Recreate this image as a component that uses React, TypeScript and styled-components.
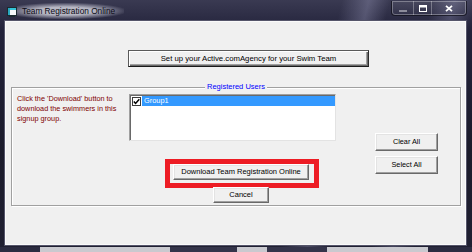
import type { FC } from 'react'
import { createGlobalStyle, styled } from 'styled-components'

const GlobalStyle = createGlobalStyle`
  html, body {
    margin: 0;
    padding: 0;
    background: #1e1e2e;
  }
  body {
    font-family: 'Liberation Sans', Arial, sans-serif;
  }
`

const Window = styled.div`
  width: 472px;
  height: 252px;
  box-sizing: border-box;
  display: flex;
  flex-direction: column;
  overflow: hidden;
  background:
    linear-gradient(
        to right,
        #2b2b40 0 40px,
        #c9c9cf 40px 170px,
        #34344a 170px 237px,
        #c9c9cf 237px 267px,
        #34344a 267px 327px,
        #c9c9cf 327px 428px,
        #2b2b40 428px
      )
      0 247px / 100% 5px no-repeat,
    linear-gradient(
      104deg,
      transparent 64%,
      rgba(170, 170, 205, 0.32) 69%,
      transparent 73%,
      transparent 81%,
      rgba(160, 160, 200, 0.28) 85%,
      transparent 89%
    ),
    linear-gradient(#3a3a52, #22223a 12%, #1b1b2b 60%, #202032);
`

const TitleBar = styled.div`
  height: 21px;
  display: flex;
  align-items: flex-start;
  flex-shrink: 0;
`

const AppIcon = styled.svg`
  margin: 7px 0 0 7px;
  flex-shrink: 0;
`

const TitleText = styled.div`
  margin: 3px 0 0 0;
  padding: 0 9px 0 5px;
  height: 16px;
  line-height: 16px;
  font-size: 8.3px;
  color: #0a0a14;
  background: radial-gradient(
    ellipse at 45% 50%,
    rgba(215, 215, 225, 0.8) 35%,
    rgba(200, 200, 215, 0.35) 60%,
    rgba(200, 200, 215, 0) 75%
  );
`

const CaptionGroup = styled.div`
  margin: 1px 5px 0 auto;
  height: 14px;
  display: flex;
  border: 1px solid rgba(10, 10, 20, 0.7);
  border-top: none;
  border-radius: 0 0 4px 4px;
  box-shadow: inset 0 0 0 1px rgba(255, 255, 255, 0.3);
  overflow: hidden;
  background: linear-gradient(rgba(255, 255, 255, 0.08), rgba(255, 255, 255, 0.02));
`

const CaptionButton = styled.div<{ $w: number }>`
  width: ${(p) => p.$w}px;
  height: 100%;
  display: flex;
  align-items: center;
  justify-content: center;
  & + & {
    border-left: 1px solid rgba(255, 255, 255, 0.3);
  }
`

const Client = styled.div`
  flex: 1;
  margin: 0 6px 7px 5px;
  background: #f0f0f0;
  border: 1px solid #fafafa;
  box-shadow: 0 0 0 1px #55556a;
  display: flex;
  flex-direction: column;
  align-items: flex-start;
`

const ClassicButton = styled.button`
  box-sizing: border-box;
  padding: 0;
  margin: 0;
  display: flex;
  align-items: center;
  justify-content: center;
  font-family: 'Liberation Sans', Arial, sans-serif;
  font-size: 7.5px;
  line-height: 1;
  color: #000;
  background: #f0f0f0;
  border: 1px solid;
  border-color: #ffffff #696969 #696969 #ffffff;
  box-shadow: inset -1px -1px #a0a0a0, inset 1px 1px #e3e3e3;
  cursor: default;
`

const SetupButton = styled(ClassicButton)`
  width: 241px;
  height: 17px;
  margin: 28px 0 0 122px;
  font-size: 7.75px;
  border-color: #5a5a5a #2a2a2a #1a1a1a #5a5a5a;
  box-shadow: inset 1px 1px #ffffff, inset -1px -1px #696969, inset -2px -2px #a0a0a0;
`

const GroupBox = styled.div`
  position: relative;
  box-sizing: border-box;
  width: 450px;
  height: 119px;
  margin: 20px 0 0 5px;
  border: 1px solid #a0a0a0;
  box-shadow: inset 1px 1px #ffffff, 1px 1px #ffffff;
  display: flex;
  align-items: flex-start;
`

const Legend = styled.span`
  position: absolute;
  top: -6px;
  left: 50%;
  transform: translateX(-50%);
  padding: 0 2px;
  background: #f0f0f0;
  color: #0000ff;
  font-size: 7.5px;
  line-height: 10px;
  white-space: nowrap;
`

const HelpText = styled.p`
  margin: 6px 0 0 5px;
  width: 112px;
  color: #800000;
  font-size: 7.3px;
  line-height: 10px;
`

const MiddleColumn = styled.div`
  width: 207px;
  display: flex;
  flex-direction: column;
  align-items: flex-start;
`

const ListBox = styled.div`
  box-sizing: border-box;
  width: 207px;
  height: 47px;
  margin-top: 6px;
  background: #ffffff;
  border: 1px solid;
  border-color: #a0a0a0 #e3e3e3 #e3e3e3 #a0a0a0;
  box-shadow: inset 1px 1px #696969;
  padding: 1px 0 0 1px;
`

const ListRow = styled.div`
  display: flex;
  align-items: center;
  height: 10px;
`

const CheckBox = styled.span`
  box-sizing: border-box;
  width: 9px;
  height: 9px;
  margin-left: 1px;
  border: 1px solid #3c3c3c;
  background: #ffffff;
  display: flex;
  align-items: center;
  justify-content: center;
  flex-shrink: 0;
`

const RowLabel = styled.span<{ $selected: boolean }>`
  flex: 1;
  height: 10px;
  margin-left: 1px;
  padding-left: 2px;
  font-size: 7.4px;
  line-height: 10px;
  color: ${(p) => (p.$selected ? '#ffffff' : '#000000')};
  background: ${(p) => (p.$selected ? '#3399ff' : 'transparent')};
`

const Highlight = styled.div`
  box-sizing: border-box;
  width: 154px;
  height: 29px;
  margin: 18px 0 0 36px;
  border: 5px solid #ed1c24;
  padding: 0 5px 3px 3px;
`

const DownloadButton = styled(ClassicButton)`
  width: 136px;
  height: 16px;
`

const CancelButton = styled(ClassicButton)`
  width: 56px;
  height: 16px;
  margin: -1px 0 0 84px;
`

const SideColumn = styled.div`
  margin: 45px 0 0 39px;
  display: flex;
  flex-direction: column;
  gap: 5px;
`

const SideButton = styled(ClassicButton)`
  width: 63px;
  height: 18px;
  font-size: 7.3px;
`

const TeamIcon: FC = () => (
  <AppIcon width="10" height="10" viewBox="0 0 10 10">
    <rect x="0.5" y="0.5" width="9" height="8" fill="#f4f8fa" stroke="#1a2a30" />
    <rect x="1" y="1" width="8" height="2" fill="#35c4d8" />
    <rect x="1" y="1" width="2" height="7" fill="#2aa8c0" />
    <rect x="2" y="8.5" width="6" height="1.5" fill="#1a2a30" />
  </AppIcon>
)

const App: FC = () => {
  return (
    <>
      <GlobalStyle />
      <Window>
        <TitleBar>
          <TeamIcon />
          <TitleText>Team Registration Online</TitleText>
          <CaptionGroup>
            <CaptionButton $w={21}>
              <svg width="8" height="3" viewBox="0 0 8 3" style={{ marginTop: 7 }}>
                <rect x="0" y="0" width="8" height="2" fill="#8c8c9a" />
              </svg>
            </CaptionButton>
            <CaptionButton $w={17}>
              <svg width="8" height="7" viewBox="0 0 8 7">
                <rect x="0.5" y="0.5" width="7" height="6" fill="none" stroke="#ffffff" />
                <rect x="1" y="1" width="6" height="1.5" fill="#ffffff" />
              </svg>
            </CaptionButton>
            <CaptionButton $w={34}>
              <svg width="8" height="7" viewBox="0 0 8 7">
                <path d="M1 0.8 L7 6.2 M7 0.8 L1 6.2" stroke="#ffffff" strokeWidth="1.8" />
              </svg>
            </CaptionButton>
          </CaptionGroup>
        </TitleBar>

        <Client>
          <SetupButton>Set up your Active.comAgency for your Swim Team</SetupButton>

          <GroupBox>
            <Legend>Registered Users</Legend>

            <HelpText>
              Click the 'Download' button to download the swimmers in this signup group.
            </HelpText>

            <MiddleColumn>
              <ListBox>
                <ListRow>
                  <CheckBox>
                    <svg width="7" height="7" viewBox="0 0 7 7">
                      <path d="M0.8 3.4 L2.6 5.4 L6.3 1.2" fill="none" stroke="#000" strokeWidth="1.5" />
                    </svg>
                  </CheckBox>
                  <RowLabel $selected>Group1</RowLabel>
                </ListRow>
              </ListBox>

              <Highlight>
                <DownloadButton>Download Team Registration Online</DownloadButton>
              </Highlight>

              <CancelButton>Cancel</CancelButton>
            </MiddleColumn>

            <SideColumn>
              <SideButton>Clear All</SideButton>
              <SideButton>Select All</SideButton>
            </SideColumn>
          </GroupBox>
        </Client>
      </Window>
    </>
  )
}

export default App
